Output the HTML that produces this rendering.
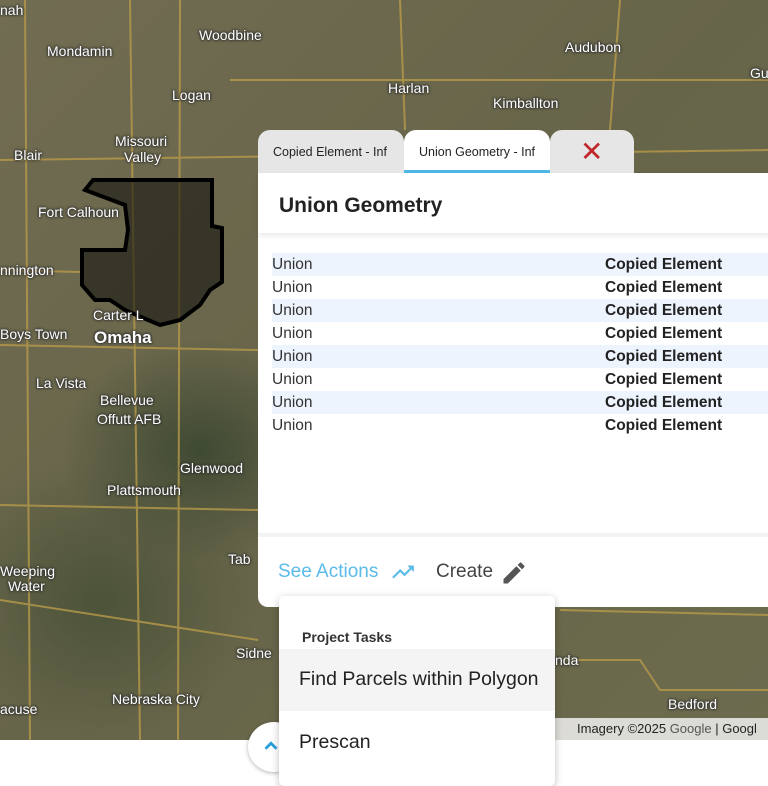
<!DOCTYPE html>
<html><head><meta charset="utf-8"><style>
*{margin:0;padding:0;box-sizing:border-box}
body{width:768px;height:784px;overflow:hidden;background:#fff;font-family:"Liberation Sans",sans-serif;position:relative}
#map{position:absolute;left:0;top:0;width:768px;height:740px;background:
radial-gradient(ellipse at 200px 450px,#3f4a33 0,transparent 140px),
radial-gradient(ellipse at 650px 300px,#5d6447 0,transparent 200px),
radial-gradient(ellipse at 100px 600px,#4c5339 0,transparent 160px),
linear-gradient(135deg,#716c52,#676549 50%,#6c6b4e);overflow:hidden}
.lb{position:absolute;color:#fff;font-size:14px;text-shadow:0 0 2px #333,0 0 3px #333,0 0 2px #333}
.big{font-size:17px;font-weight:bold}
#panel{position:absolute;left:258px;top:173px;width:520px;height:434px;background:#fff;border-radius:0 0 0 10px}
.tab{position:absolute;top:130px;height:43px;border-radius:12px 12px 0 0;font-size:12.5px;color:#222;padding:15px 0 0 15px;white-space:nowrap;overflow:hidden}
.row{position:absolute;left:14px;width:520px;height:23px;font-size:15.5px;line-height:23px}
.row .a{position:absolute;left:0;color:#333}
.row .b{position:absolute;left:333px;font-weight:bold;color:#222}
</style></head><body>
<div id="map">
<svg width="768" height="740" style="position:absolute;left:0;top:0">
<g stroke="#b79a4a" stroke-width="2" fill="none" opacity=".8">
<path d="M0 160 L768 150"/><path d="M25 0 L30 740"/><path d="M130 0 L140 740"/><path d="M180 0 L178 740"/><path d="M0 345 L258 350"/><path d="M0 505 L258 510"/><path d="M400 0 L405 130"/><path d="M560 610 L768 615"/><path d="M620 0 L610 130"/><path d="M0 270 L80 272"/><path d="M230 80 L768 80"/><path d="M560 660 L640 660 L660 690 L768 690"/><path d="M0 600 L258 640"/>
</g>
<polygon points="93,180 212,180 212,226 222,228 222,282 210,290 200,305 180,320 160,325 148,320 125,310 110,300 95,300 82,285 82,250 125,250 128,230 125,205 85,190" fill="rgba(20,20,15,.6)" stroke="#000" stroke-width="4"/>
</svg>
<div class="lb" style="left:0;top:2px">nah</div>
<div class="lb" style="left:47px;top:43px">Mondamin</div>
<div class="lb" style="left:199px;top:27px">Woodbine</div>
<div class="lb" style="left:172px;top:87px">Logan</div>
<div class="lb" style="left:115px;top:133px">Missouri</div>
<div class="lb" style="left:124px;top:149px">Valley</div>
<div class="lb" style="left:14px;top:147px">Blair</div>
<div class="lb" style="left:388px;top:80px">Harlan</div>
<div class="lb" style="left:565px;top:39px">Audubon</div>
<div class="lb" style="left:750px;top:65px">Gu</div>
<div class="lb" style="left:493px;top:95px">Kimballton</div>
<div class="lb" style="left:38px;top:204px">Fort Calhoun</div>
<div class="lb" style="left:0;top:262px">nnington</div>
<div class="lb" style="left:93px;top:307px">Carter L</div>
<div class="lb" style="left:0;top:326px">Boys Town</div>
<div class="lb big" style="left:94px;top:328px">Omaha</div>
<div class="lb" style="left:36px;top:375px">La Vista</div>
<div class="lb" style="left:100px;top:392px">Bellevue</div>
<div class="lb" style="left:97px;top:411px">Offutt AFB</div>
<div class="lb" style="left:180px;top:460px">Glenwood</div>
<div class="lb" style="left:107px;top:482px">Plattsmouth</div>
<div class="lb" style="left:0;top:563px">Weeping</div>
<div class="lb" style="left:8px;top:578px">Water</div>
<div class="lb" style="left:228px;top:551px">Tab</div>
<div class="lb" style="left:236px;top:645px">Sidne</div>
<div class="lb" style="left:112px;top:691px">Nebraska City</div>
<div class="lb" style="left:0;top:701px">acuse</div>
<div class="lb" style="left:668px;top:696px">Bedford</div>
<div class="lb" style="left:555px;top:652px">nda</div>
<div style="position:absolute;left:555px;top:718px;width:213px;height:22px;background:rgba(240,240,240,.85);font-size:13px;line-height:22px;padding-left:22px;color:#222">Imagery ©2025 <span style="color:#555">Google</span> | Googl</div>
</div>
<div class="tab" style="left:258px;width:146px;background:#e6e6e6">Copied Element - Inf</div>
<div class="tab" style="left:404px;width:146px;background:#fff;border-bottom:3px solid #4fb8e6">Union Geometry - Inf</div>
<div class="tab" style="left:550px;width:84px;background:#e6e6e6;padding:8px 0 0 30px;font-size:28px;color:#c0262b;line-height:28px">✕</div>
<div id="panel">
<div style="height:60px;box-shadow:0 3px 5px rgba(0,0,0,.08);padding:21px 0 0 21px;font-size:21px;font-weight:bold;color:#222">Union Geometry</div>
<div class="row" style="top:80px;background:#eef4fd"><span class="a">Union</span><span class="b">Copied Element</span></div>
<div class="row" style="top:103px"><span class="a">Union</span><span class="b">Copied Element</span></div>
<div class="row" style="top:126px;background:#eef4fd"><span class="a">Union</span><span class="b">Copied Element</span></div>
<div class="row" style="top:149px"><span class="a">Union</span><span class="b">Copied Element</span></div>
<div class="row" style="top:172px;background:#eef4fd"><span class="a">Union</span><span class="b">Copied Element</span></div>
<div class="row" style="top:195px"><span class="a">Union</span><span class="b">Copied Element</span></div>
<div class="row" style="top:218px;background:#eef4fd"><span class="a">Union</span><span class="b">Copied Element</span></div>
<div class="row" style="top:241px"><span class="a">Union</span><span class="b">Copied Element</span></div>
<div style="position:absolute;top:360px;left:0;width:520px;height:4px;background:#f3f3f3"></div>
<div style="position:absolute;left:20px;top:388px;font-size:19px;color:#5bbbe8">See Actions</div>
<svg style="position:absolute;left:130px;top:386px" width="30" height="26" viewBox="0 0 24 24"><path d="M16 6l2.3 2.3-4.9 4.9-4-4L2 16.6 3.4 18l6-6 4 4 6.3-6.3L22 12V6z" fill="#5bbbe8"/></svg>
<div style="position:absolute;left:178px;top:388px;font-size:19px;color:#444">Create</div>
<svg style="position:absolute;left:242px;top:386px" width="28" height="28" viewBox="0 0 24 24"><path d="M3 17.25V21h3.75L17.8 9.94l-3.75-3.75zM20.7 7.04a1 1 0 000-1.41l-2.34-2.34a1 1 0 00-1.41 0l-1.83 1.83 3.75 3.75z" fill="#555"/></svg>
</div>
<div style="position:absolute;left:248px;top:722px;width:52px;height:50px;border-radius:50%;background:#fff;box-shadow:0 1px 4px rgba(0,0,0,.3)"><svg style="position:absolute;left:12px;top:13px" width="22" height="22" viewBox="0 0 24 24"><path d="M6 15l6-6 6 6" stroke="#2a9fd8" stroke-width="3" fill="none"/></svg></div>
<div style="position:absolute;left:279px;top:596px;width:276px;height:190px;background:#fff;border-radius:5px;box-shadow:0 2px 8px rgba(0,0,0,.25)">
<div style="position:absolute;left:23px;top:33px;font-size:14px;font-weight:bold;color:#333">Project Tasks</div>
<div style="position:absolute;left:0;top:53px;width:276px;height:62px;background:#f4f4f4"></div>
<div style="position:absolute;left:20px;top:72px;font-size:19.5px;color:#222">Find Parcels within Polygon</div>
<div style="position:absolute;left:20px;top:135px;font-size:19.5px;color:#222">Prescan</div>
</div>
</body></html>
